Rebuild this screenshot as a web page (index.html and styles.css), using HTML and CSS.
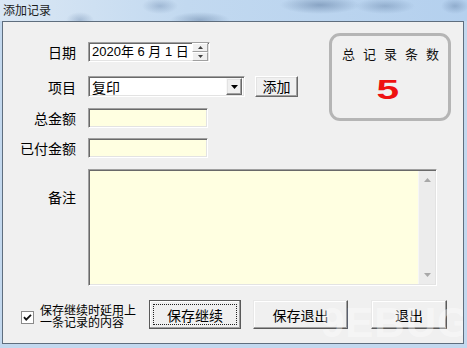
FILE: index.html
```html
<!DOCTYPE html>
<html lang="zh-CN">
<head>
<meta charset="utf-8">
<title>添加记录</title>
<link rel="stylesheet" href="styles.css">
</head>
<body>
<div class="window">
  <div class="titlebar"><span class="title">添加记录</span></div>
  <div class="client">
    <div class="top">
      <div class="form">
        <div class="row r1">
          <span class="label">日期</span>
          <div class="field date">
            <span class="date-text">2020年 6 月 1 日</span>
            <div class="spin">
              <span class="spin-btn"><svg width="5" height="3" viewBox="0 0 5 3"><path d="M0 3 L2.5 0 L5 3 Z" fill="#404040"/></svg></span>
              <span class="spin-btn"><svg width="5" height="3" viewBox="0 0 5 3"><path d="M0 0 L2.5 3 L5 0 Z" fill="#404040"/></svg></span>
            </div>
          </div>
        </div>
        <div class="row r2">
          <span class="label">项目</span>
          <div class="field combo">
            <span class="combo-text">复印</span>
            <span class="combo-btn"><svg width="7" height="4" viewBox="0 0 7 4"><path d="M0 0 L7 0 L3.5 4 Z" fill="#000"/></svg></span>
          </div>
          <button class="btn btn-add">添加</button>
        </div>
        <div class="row r3">
          <span class="label">总金额</span>
          <div class="field input"></div>
        </div>
        <div class="row r4">
          <span class="label">已付金额</span>
          <div class="field input"></div>
        </div>
      </div>
      <div class="counter">
        <div class="counter-title">总记录条数</div>
        <div class="counter-value"><span class="digit">5</span></div>
      </div>
    </div>
    <div class="memo-row">
      <span class="label memo-label">备注</span>
      <div class="field memo">
        <div class="memo-text"></div>
        <div class="vscroll">
          <svg width="7" height="4" viewBox="0 0 7 4"><path d="M0 4 L3.5 0 L7 4 Z" fill="#a8a8a8"/></svg>
          <svg width="7" height="4" viewBox="0 0 7 4"><path d="M0 0 L7 0 L3.5 4 Z" fill="#a8a8a8"/></svg>
        </div>
      </div>
    </div>
    <div class="bottom">
      <span class="checkbox"><svg width="13" height="13" viewBox="0 0 13 13"><rect x="0.5" y="0.5" width="12" height="12" fill="#fff" stroke="#8a8a8a"/><path d="M3 6.2 L5.2 8.6 L10 3.8" fill="none" stroke="#111" stroke-width="1.8"/></svg></span>
      <span class="check-text">保存继续时延用上<br>一条记录的内容</span>
      <button class="btn btn-big btn-default"><span class="focus">保存继续</span></button>
      <button class="btn btn-big btn-save">保存退出</button>
      <button class="btn btn-big btn-exit">退出</button>
    </div>
    <div class="watermark">9EBUG</div>
  </div>
</div>
</body>
</html>
```
FILE: styles.css
```css
* { box-sizing: border-box; }
html, body { margin: 0; padding: 0; }
body {
  width: 467px;
  height: 348px;
  overflow: hidden;
  background: #c3d8ee;
  font-family: "Liberation Sans", "Noto Sans CJK SC", sans-serif;
  color: #000;
}
.window {
  width: 467px;
  height: 348px;
  display: flex;
  flex-direction: column;
}
.titlebar {
  height: 21px;
  padding-left: 3px;
  background:
    radial-gradient(ellipse 14px 8px at 80px 20px, rgba(90,120,160,0.35), transparent),
    radial-gradient(ellipse 18px 8px at 160px 6px, rgba(90,120,160,0.35), transparent),
    radial-gradient(ellipse 30px 8px at 200px 20px, rgba(60,90,130,0.35), transparent),
    radial-gradient(ellipse 40px 9px at 320px 5px, rgba(60,90,130,0.4), transparent),
    radial-gradient(ellipse 30px 8px at 385px 6px, rgba(60,90,130,0.3), transparent),
    radial-gradient(ellipse 14px 8px at 455px 6px, rgba(60,90,130,0.3), transparent),
    linear-gradient(90deg, #dae7f4 0%, #c2d9f0 40%, #b4d0ee 100%);
}
.title {
  font-size: 12px;
  line-height: 19px;
  color: #1b1b1b;
  font-family: "Noto Sans CJK SC", sans-serif;
}
.client {
  position: relative;
  width: 462px;
  height: 323px;
  margin-left: 2px;
  border: 1px solid #5f6e7e;
  background: #f0f0f0;
  overflow: hidden;
}
.top {
  display: flex;
  align-items: flex-start;
}
.form {
  width: 326px;
  padding-top: 20px;
  display: flex;
  flex-direction: column;
}
.row {
  display: flex;
  align-items: center;
}
.r2 { margin-top: 14px; }
.r3 { margin-top: 11px; }
.r4 { margin-top: 10px; }
.label {
  width: 73px;
  text-align: right;
  font-size: 14px;
  line-height: 20px;
  font-family: "Noto Sans CJK SC", sans-serif;
  flex: none;
}
.field {
  margin-left: 12px;
  flex: none;
  border-top: 1px solid #a0a0a0;
  border-left: 1px solid #a0a0a0;
  border-right: 1px solid #ffffff;
  border-bottom: 1px solid #ffffff;
  box-shadow: inset 1px 1px 0 #696969, inset -1px -1px 0 #e3e3e3;
}
.date {
  width: 122px;
  height: 20px;
  background: #fff;
  display: flex;
  align-items: center;
  padding-left: 3px;
}
.date-text {
  font-size: 13px;
  line-height: 18px;
  flex: 1;
  white-space: pre;
}
.spin {
  width: 16px;
  height: 18px;
  display: flex;
  flex-direction: column;
  margin-right: 1px;
}
.spin-btn {
  flex: 1;
  display: flex;
  align-items: center;
  justify-content: center;
  background: #f0f0f0;
  border-top: 1px solid #fff;
  border-left: 1px solid #fff;
  border-right: 1px solid #a0a0a0;
  border-bottom: 1px solid #a0a0a0;
}
.combo {
  width: 157px;
  height: 21px;
  background: #fff;
  display: flex;
  align-items: center;
  padding-left: 3px;
}
.combo-text {
  flex: 1;
  font-size: 14px;
  line-height: 18px;
  font-family: "Noto Sans CJK SC", sans-serif;
}
.combo-btn {
  width: 16px;
  height: 17px;
  margin-right: 2px;
  display: flex;
  align-items: center;
  justify-content: center;
  background: #f0f0f0;
  border-top: 1px solid #f8f8f8;
  border-left: 1px solid #f8f8f8;
  border-right: 1px solid #696969;
  border-bottom: 1px solid #696969;
  box-shadow: inset -1px -1px 0 #a0a0a0, inset 1px 1px 0 #e3e3e3;
}
.btn {
  flex: none;
  padding: 0;
  margin: 0;
  font-family: "Noto Sans CJK SC", sans-serif;
  font-size: 14px;
  color: #000;
  background: #f0f0f0;
  border-top: 1px solid #ffffff;
  border-left: 1px solid #ffffff;
  border-right: 1px solid #696969;
  border-bottom: 1px solid #696969;
  box-shadow: inset -1px -1px 0 #a0a0a0, inset 1px 1px 0 #e3e3e3;
  display: flex;
  align-items: center;
  justify-content: center;
}
.btn-add {
  width: 43px;
  height: 21px;
  margin-left: 10px;
  line-height: 17px;
  padding-bottom: 1px;
}
.input {
  width: 120px;
  height: 20px;
  background: #ffffe1;
}
.counter {
  width: 122px;
  height: 88px;
  margin-top: 11px;
  border: 3px solid #b5b5b5;
  border-radius: 11px;
  padding-top: 10px;
  text-align: center;
}
.counter-title {
  font-size: 13px;
  line-height: 16px;
  letter-spacing: 8px;
  padding-left: 9px;
  color: #111;
  font-family: "Noto Sans CJK SC", sans-serif;
}
.counter-value {
  margin-top: 12px;
  line-height: 32px;
  font-size: 28px;
  font-weight: bold;
  color: #ee1111;
  padding-right: 5px;
}
.digit {
  display: inline-block;
  transform: scaleX(1.45);
}
.memo-row {
  display: flex;
  align-items: flex-start;
  margin-top: 11px;
}
.memo-label {
  margin-top: 18px;
}
.memo {
  width: 349px;
  height: 117px;
  background: #ffffe1;
  display: flex;
}
.memo-text { flex: 1; }
.vscroll {
  width: 17px;
  margin: 1px 1px 1px 0;
  background: #ececec;
  border-left: 1px solid #f6f6f6;
  display: flex;
  flex-direction: column;
  justify-content: space-between;
  align-items: center;
  padding: 7px 0 7px;
}
.bottom {
  display: flex;
  align-items: center;
  margin-top: 14px;
  padding-left: 18px;
}
.checkbox {
  width: 13px;
  height: 13px;
  display: flex;
  margin-top: 6px;
}
.check-text {
  margin-left: 6px;
  margin-top: 3px;
  width: 97px;
  font-size: 12px;
  line-height: 12px;
  font-family: "Noto Sans CJK SC", sans-serif;
  white-space: nowrap;
}
.btn-big {
  height: 29px;
  border-top: 1px solid #e8e8e8;
  border-left: 1px solid #e8e8e8;
  border-right: 1px solid #5a5a5a;
  border-bottom: 1px solid #5a5a5a;
  box-shadow: inset -1px -1px 0 #a0a0a0, inset 1px 1px 0 #ffffff;
  line-height: 20px;
}
.btn-default {
  width: 92px;
  margin-left: 12px;
  padding: 3px;
  border: 1px solid #5a5a5a;
}
.focus {
  display: flex;
  align-items: center;
  justify-content: center;
  width: 100%;
  height: 100%;
  border: 1px dotted #222;
}
.btn-save {
  width: 95px;
  margin-left: 12px;
}
.btn-exit {
  width: 76px;
  margin-left: 23px;
}
.watermark {
  position: absolute;
  left: 318px;
  top: 282px;
  font-family: "Liberation Sans", sans-serif;
  font-weight: bold;
  font-size: 42px;
  line-height: 38px;
  letter-spacing: 1px;
  color: rgba(255, 255, 255, 0.4);
  pointer-events: none;
}
```
